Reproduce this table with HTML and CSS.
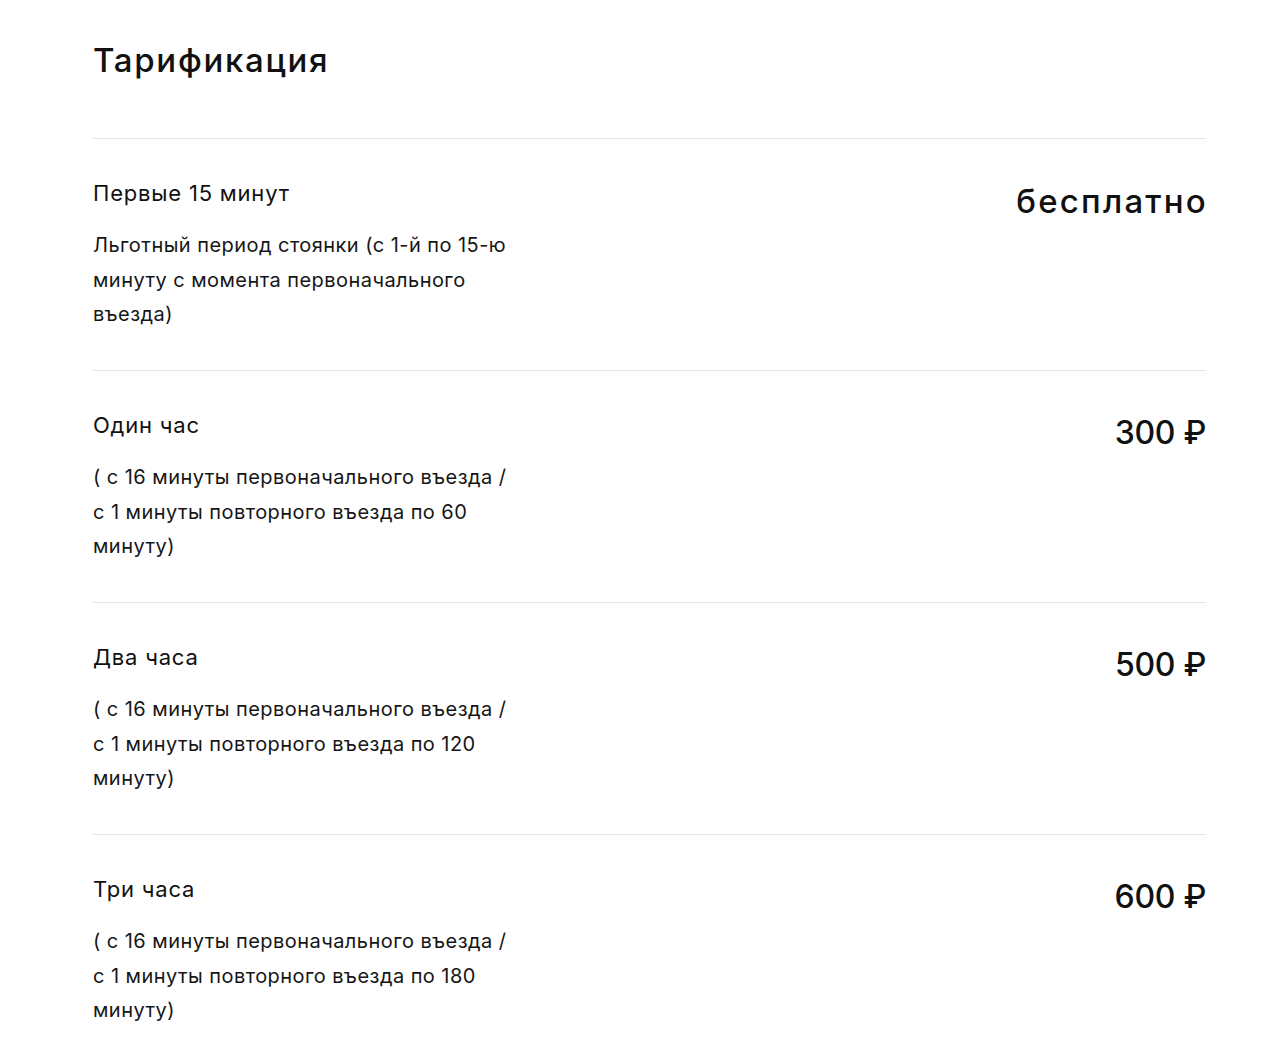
FILE: index.html
```html
<!DOCTYPE html>
<html lang="ru">
<head>
<meta charset="utf-8">
<link rel="stylesheet" href="styles.css">
</head>
<body>
<main class="page">
  <h1 class="title">Тарификация</h1>
  <section class="tariffs">
    <div class="row">
      <div class="info">
        <div class="name">Первые 15 минут</div>
        <p class="desc">Льготный период стоянки (с 1-й по 15-ю минуту с момента первоначального въезда)</p>
      </div>
      <div class="price price--free">бесплатно</div>
    </div>
    <div class="row">
      <div class="info">
        <div class="name">Один час</div>
        <p class="desc">( с 16 минуты первоначального въезда / с 1 минуты повторного въезда по 60 минуту)</p>
      </div>
      <div class="price">300 ₽</div>
    </div>
    <div class="row">
      <div class="info">
        <div class="name">Два часа</div>
        <p class="desc">( с 16 минуты первоначального въезда / с 1 минуты повторного въезда по 120 минуту)</p>
      </div>
      <div class="price">500 ₽</div>
    </div>
    <div class="row">
      <div class="info">
        <div class="name">Три часа</div>
        <p class="desc">( с 16 минуты первоначального въезда / с 1 минуты повторного въезда по 180 минуту)</p>
      </div>
      <div class="price">600 ₽</div>
    </div>
  </section>
</main>
</body>
</html>
```
FILE: styles.css
```css
html, body {
  margin: 0;
  padding: 0;
  background: #ffffff;
}
body {
  font-family: "Inter", "Open Sans", sans-serif;
  color: #111111;
}
.page {
  width: 1113px;
  margin-left: 93px;
  padding-top: 38px;
}
.title {
  margin: 0;
  font-size: 33px;
  line-height: 44px;
  font-weight: 500;
  letter-spacing: 1.7px;
  height: 100px;
}
.row {
  display: flex;
  justify-content: space-between;
  align-items: flex-start;
  border-top: 1px solid #e6e6e6;
  padding: 39px 0 38.5px;
}
.info {
  width: 420px;
}
.name {
  font-size: 22px;
  line-height: 30px;
  font-weight: 400;
  letter-spacing: 0.8px;
}
.desc {
  margin: 20px 0 0;
  font-size: 20px;
  line-height: 34.5px;
  letter-spacing: 0.45px;
  color: #161616;
}
.price {
  margin-top: 3px;
  font-size: 32px;
  line-height: 40px;
  font-weight: 500;
  letter-spacing: -0.3px;
  white-space: nowrap;
}
.price--free {
  font-size: 33px;
  letter-spacing: 2.2px;
  margin-right: -2px;
}
```
